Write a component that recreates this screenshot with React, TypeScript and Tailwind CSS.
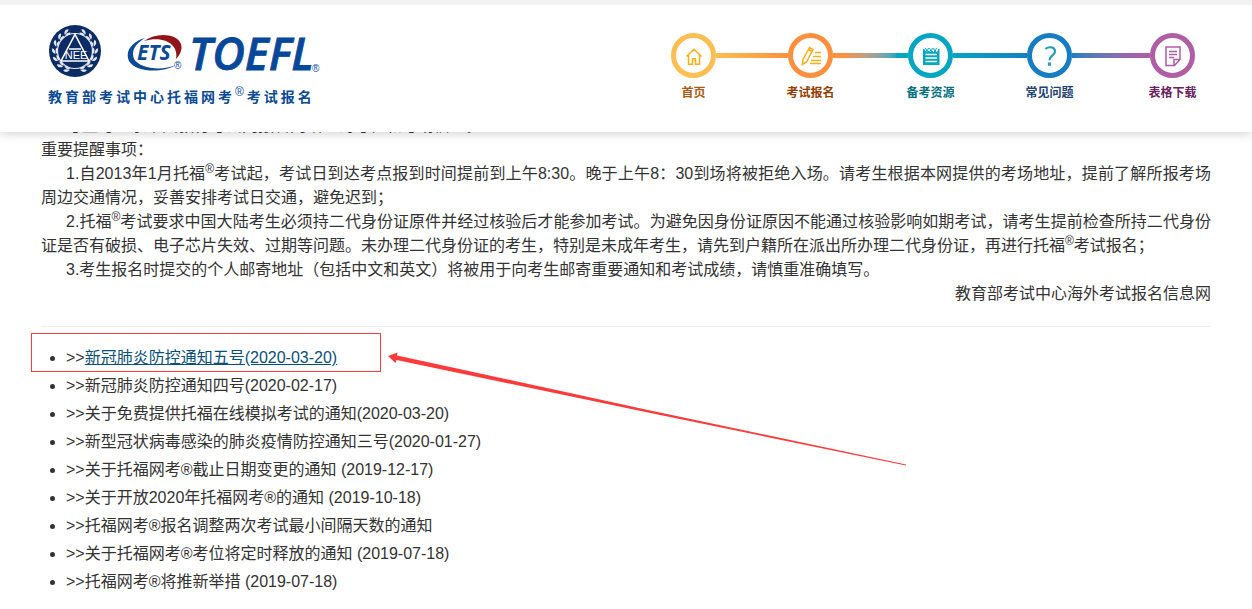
import React from "react";

type Step = {
  label: string;
  ring: string;
  text: string;
  line?: string;
  icon: React.ReactNode;
};

const steps: Step[] = [
  {
    label: "首页",
    ring: "border-[#ffbd52]",
    text: "text-[#a85a10]",
    line: "w-[72px] bg-linear-to-r from-[#ffbd52] to-[#fd8f3e]",
    icon: (
      <svg viewBox="0 0 24 24" className="size-6 shrink-0" fill="none" stroke="#fbae17" strokeWidth="1.5" aria-hidden="true">
        <path d="M4.500 12.500 12 5.200 19.500 12.500M6.500 11v9.300h4V14.700h3v5.600H17.500V11" />
      </svg>
    ),
  },
  {
    label: "考试报名",
    ring: "border-[#fd8f3e]",
    text: "text-[#933c00]",
    line: "w-[75px] bg-linear-to-r from-[#fd8f3e] from-15% to-[#05a6c1] to-85%",
    icon: (
      <svg viewBox="0 0 24 24" className="size-6 shrink-0" fill="none" stroke="#fbae17" strokeWidth="1.5" aria-hidden="true">
        <path d="M3.500 20.500 4 15.500 10.500 3.500l3.500 2L7.500 18ZM9.500 5.500l3.500 2M16 8.500h6M14 12.500h8M12 16.500h10M11 19.500h11" />
      </svg>
    ),
  },
  {
    label: "备考资源",
    ring: "border-[#05a6c1]",
    text: "text-[#04707f]",
    line: "w-[74px] bg-linear-to-r from-[#05a6c1] to-[#177dc2]",
    icon: (
      <svg viewBox="0 0 24 24" className="size-6 shrink-0" aria-hidden="true">
        <path d="M4 5h16.500v16H4Z" fill="#05a6c1" />
        <path d="M5.500 3h13.500v3.500l-1.300 1.500-1.500-1.500-1.700 1.500-1.500-1.500-1.700 1.500-1.500-1.500-1.700 1.500-2.600-2Z" fill="#fff" />
        <path d="M6.500 4l1.500 3.500L9.500 4M10.500 4l1.500 3.500L13.500 4M14.500 4l1.500 3.500L17.500 4" stroke="#05a6c1" strokeWidth="1" fill="none" />
        <path d="M6.500 10.500h11.500M6.500 14h11.500M6.500 17.500h11.500" stroke="#fff" strokeWidth="1.300" />
      </svg>
    ),
  },
  {
    label: "常见问题",
    ring: "border-[#177dc2]",
    text: "text-[#1d4273]",
    line: "w-[78px] bg-linear-to-r from-[#177dc2] to-[#b05da3]",
    icon: (
      <svg viewBox="0 0 24 24" className="size-6 shrink-0" fill="none" stroke="#259dbb" strokeWidth="2.200" aria-hidden="true">
        <path d="M7.300 5C10.500 2.300 17 2.500 17 7.500c0 4-5.500 4-5.500 8.700" />
        <path d="M11.500 18.500v3.300" strokeWidth="3.300" />
      </svg>
    ),
  },
  {
    label: "表格下载",
    ring: "border-[#b05da3]",
    text: "text-[#6a215f]",
    icon: (
      <svg viewBox="0 0 24 24" className="size-6 shrink-0" fill="none" stroke="#b05da3" strokeWidth="1.500" aria-hidden="true">
        <path d="M5 3h14v12.500L13.500 21.500H5ZM13 21.500v-6h6M8 7.500h8M8 10.500h8M8 13.500h5" />
      </svg>
    ),
  },
];

const notices = [
  "新冠肺炎防控通知五号(2020-03-20)",
  "新冠肺炎防控通知四号(2020-02-17)",
  "关于免费提供托福在线模拟考试的通知(2020-03-20)",
  "新型冠状病毒感染的肺炎疫情防控通知三号(2020-01-27)",
  "关于托福网考®截止日期变更的通知 (2019-12-17)",
  "关于开放2020年托福网考®的通知 (2019-10-18)",
  "托福网考®报名调整两次考试最小间隔天数的通知",
  "关于托福网考®考位将定时释放的通知 (2019-07-18)",
  "托福网考®将推新举措 (2019-07-18)",
];

const leaves = [24, 46, 68, 90, 112, 134, 156];

function NeeaLogo() {
  return (
    <svg viewBox="0 0 54 54" className="size-[54px]" role="img" aria-label="NEEA">
      <circle cx="27" cy="26" r="26" fill="#0d2c66" />
      {[1, -1].map((side) => (
        <g key={side} transform={side === 1 ? undefined : "translate(54 0) scale(-1 1)"}>
          {leaves.map((a) => (
            <g key={a} transform={`rotate(${a} 27 26)`} fill="#e3e9f3">
              <path d="M30 6.500Q26 6.500 24 3.500Q28 1.500 30 6.500Z" />
              <path d="M30 7.500Q26 10 23.500 7.500Q26.500 5.500 30 7.500Z" />
            </g>
          ))}
        </g>
      ))}
      <circle cx="27" cy="26" r="17.500" fill="#0d2c66" stroke="#e9eef6" strokeWidth="1.200" />
      <path d="M13 36 27 9.500 41 36M21 24h12M13 36h28" fill="none" stroke="#fff" strokeWidth="1.600" />
      <text x="28" y="34" textAnchor="middle" fontSize="11" fill="#fff" className="font-['Liberation_Sans']">NEE</text>
    </svg>
  );
}

function ToeflLogo() {
  return (
    <svg viewBox="0 0 200 46" className="h-[46px] w-[200px]" role="img" aria-label="ETS TOEFL">
      <path d="M49 36C36 44 9 44 2 32C-3 21 7 12 18 9C8 15 4 22 7 30C13 40 35 42 49 36Z" fill="#0b4a94" />
      <path d="M17 12C29 3 50 4 54 15C56 21 52 27 49 30C52 17 39 6 17 12Z" fill="#8f1519" />
      <text x="10" y="31" fontSize="21" fontWeight="700" fontStyle="italic" fill="#0b4a94" className="font-['Open_Sans']">ETS</text>
      <text x="47" y="40" fontSize="10" fill="#0b4a94" className="font-['Liberation_Sans']">®</text>
      <text x="62" y="41" fontSize="45" fontWeight="600" fontStyle="italic" fill="#07489a" stroke="#07489a" strokeWidth="0.800" className="font-['Open_Sans']">TOEFL</text>
      <text x="185" y="43" fontSize="10" fill="#0b4a94" className="font-['Liberation_Sans']">®</text>
    </svg>
  );
}

function Reg() {
  return <sup className="text-xs leading-none font-normal">®</sup>;
}

export default function App() {
  return (
    <div className="h-screen overflow-hidden bg-white font-['Liberation_Sans','Noto_Sans_CJK_SC',sans-serif] text-base leading-6 text-[#333]" lang="zh-CN">
      <header className="relative z-10 border-t-5 border-[#f2f2f2] bg-white shadow-[0_1px_10px_rgba(0,0,0,0.2)]">
        <div className="flex h-[127px] items-start justify-between pr-[57px] pl-12">
          <div className="pt-5">
            <div className="flex items-center gap-[25px]">
              <NeeaLogo />
              <ToeflLogo />
            </div>
            <h1 className="mt-1.5 text-sm leading-6 font-bold tracking-[3px] text-[#0b4a94]">
              教育部考试中心托福网考<Reg />考试报名
            </h1>
          </div>
          <nav aria-label="主导航" className="flex items-start pt-7">
            {steps.map((s) => (
              <React.Fragment key={s.label}>
                <a href="#" className="flex w-[45px] flex-col items-center">
                  <span className={`flex size-[45px] items-center justify-center rounded-full border-5 ${s.ring}`}>
                    {s.icon}
                  </span>
                  <span className={`mt-[7px] text-xs leading-4 font-bold whitespace-nowrap ${s.text}`}>{s.label}</span>
                </a>
                {s.line && <span className={`mt-5 h-[5px] ${s.line}`} />}
              </React.Fragment>
            ))}
          </nav>
        </div>
      </header>

      <main className="-mt-[18px] px-[41px]">
        <section className="text-justify">
          <p className="indent-[25px]">考生可登录中国教育考试网报名网站查询考位和考场信息。</p>
          <p>重要提醒事项：</p>
          <p className="indent-[25px]">
            1.自2013年1月托福<Reg />考试起，考试日到达考点报到时间提前到上午8:30。晚于上午8：30到场将被拒绝入场。请考生根据本网提供的考场地址，提前了解所报考场周边交通情况，妥善安排考试日交通，避免迟到；
          </p>
          <p className="indent-[25px]">
            2.托福<Reg />考试要求中国大陆考生必须持二代身份证原件并经过核验后才能参加考试。为避免因身份证原因不能通过核验影响如期考试，请考生提前检查所持二代身份证是否有破损、电子芯片失效、过期等问题。未办理二代身份证的考生，特别是未成年考生，请先到户籍所在派出所办理二代身份证，再进行托福<Reg />考试报名；
          </p>
          <p className="indent-[25px]">
            3.考生报名时提交的个人邮寄地址（包括中文和英文）将被用于向考生邮寄重要通知和考试成绩，请慎重准确填写。
          </p>
          <p className="text-right">教育部考试中心海外考试报名信息网</p>
        </section>
        <hr className="mt-5 border-[#eee]" />
        <ul className="mt-[17px] list-disc pl-[25px] leading-7">
          {notices.map((n, i) => (
            <li key={n}>
              {i === 0 ? (
                <span className="relative">
                  &gt;&gt;<a href="#" className="text-[#0a4f78] underline">{n}</a>
                  <span className="pointer-events-none absolute -top-4 -left-[35px] h-[39px] w-[350px] border border-[#fa3c3c]" />
                  <svg viewBox="0 0 520 120" className="pointer-events-none absolute top-0.5 left-[322px] h-[120px] w-[520px] max-w-none" aria-hidden="true">
                    <path d="M0 5 9.500 1.500 9 4.500 260 59 518 113.500V114.500L260 61.500 8.500 9 7.500 12Z" fill="#fd3a3a" />
                  </svg>
                </span>
              ) : (
                <a href="#">&gt;&gt;{n}</a>
              )}
            </li>
          ))}
        </ul>
      </main>
    </div>
  );
}
